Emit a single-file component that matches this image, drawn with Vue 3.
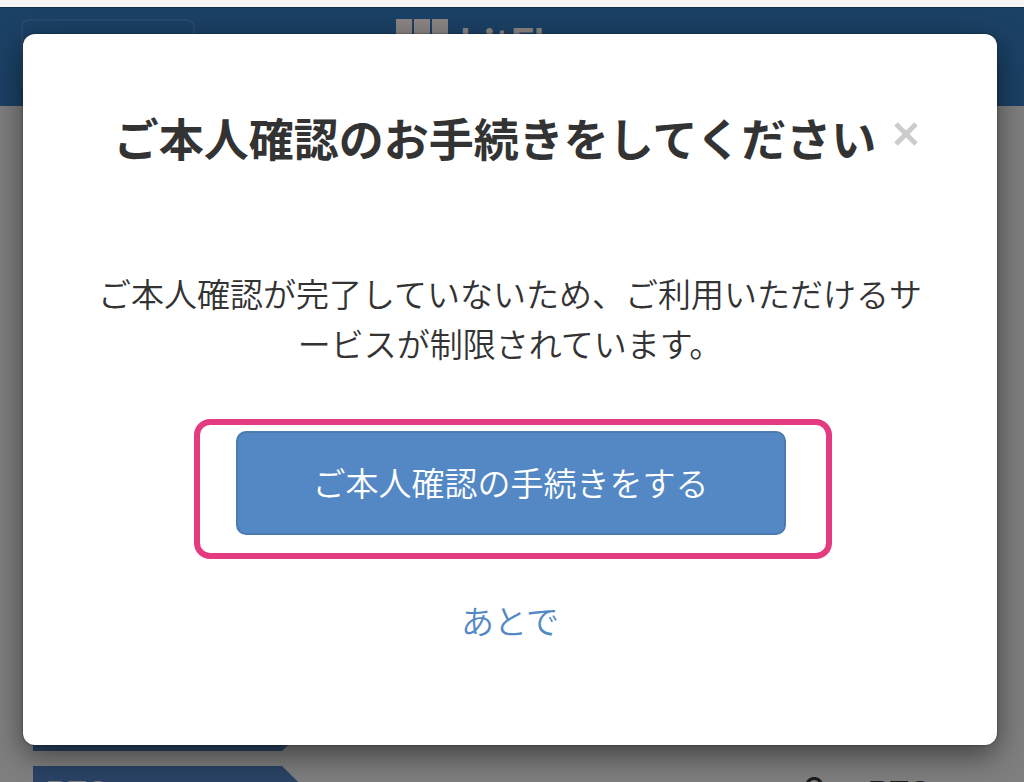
<script setup>
import { ref } from 'vue'

const open = ref(true)
const rows = [
  { unit: 'JPY', amount: '0' },
  { unit: 'BTC', amount: '0' },
]
</script>

<template>
  <div class="screen">
    <div class="page" aria-hidden="true">
      <header class="header">
        <span class="menu"></span>
        <span class="brand">
          <svg class="mark" viewBox="0 0 52 52" width="52" height="52">
            <rect x="0" y="0" width="16" height="16" />
            <rect x="18" y="0" width="16" height="16" />
            <rect x="36" y="0" width="16" height="16" />
            <rect x="0" y="18" width="16" height="16" />
            <rect x="18" y="18" width="16" height="16" />
            <rect x="0" y="36" width="16" height="16" />
          </svg>
          <span class="name">bitFlyer</span>
        </span>
      </header>
      <ul class="rows">
        <li v-for="row in rows" :key="row.unit" class="row">
          <span class="tag">{{ row.unit }}</span>
          <span class="amount">{{ row.amount }}</span>
          <span class="unit">{{ row.unit }}</span>
        </li>
      </ul>
    </div>

    <div v-if="open" class="backdrop">
      <section class="modal" role="dialog" aria-modal="true" aria-labelledby="modal-title">
        <div class="head">
          <h1 id="modal-title" class="title">ご本人確認のお手続きをしてください</h1>
          <button class="close" type="button" aria-label="閉じる" @click="open = false">
            <svg viewBox="0 0 24 24" width="24" height="24">
              <path d="M2 2L22 22M22 2L2 22" />
            </svg>
          </button>
        </div>
        <p class="message">ご本人確認が完了していないため、ご利用いただけるサービスが制限されています。</p>
        <div class="highlight">
          <button class="primary" type="button">ご本人確認の手続きをする</button>
        </div>
        <a class="later" href="#" @click.prevent="open = false">あとで</a>
      </section>
    </div>
  </div>
</template>

<style>
body {
  background: #7f7f7f;
}
</style>

<style scoped>
.screen {
  position: relative;
  min-height: 100vh;
  overflow: hidden;
  font-family: "Noto Sans CJK JP", sans-serif;
  color: #333;
}

.page {
  position: absolute;
  inset: 0;
  overflow: hidden;
  background: #7f7f7f;
  font-family: "Liberation Sans", sans-serif;
}

.header {
  display: grid;
  grid-template-columns: 1fr auto 1fr;
  align-items: start;
  box-sizing: border-box;
  height: 106px;
  padding: 12px 21px;
  border-top: 7px solid #f6f6f6;
  background: #1b4165;
  box-shadow: inset 0 1px 0 #173149;
}

.menu {
  box-sizing: border-box;
  width: 174px;
  height: 74px;
  border: 2px solid #28496a;
  border-radius: 8px;
}

.brand {
  display: flex;
  gap: 12px;
  padding-right: 24px;
  color: #8a8583;
}

.mark {
  fill: currentColor;
}

.name {
  font-family: Lato, sans-serif;
  font-size: 42px;
  font-weight: 700;
  line-height: 48px;
}

.rows {
  display: grid;
  gap: 15px;
  margin: 540px 33px 0;
  padding: 0;
  list-style: none;
}

.row {
  display: flex;
  align-items: flex-start;
  height: 105px;
  color: #1c1c1c;
  font-size: 30px;
  line-height: 40px;
}

.tag {
  box-sizing: border-box;
  width: 302px;
  height: 105px;
  padding: 5px 13px;
  background: #2a4365;
  clip-path: polygon(0 0, 249px 0, 100% 50%, 249px 100%, 0 100%);
  color: #807f7f;
  font-weight: 700;
}

.amount {
  margin-left: auto;
  padding: 5px 0;
  font-size: 40px;
}

.unit {
  padding: 5px 61px 5px 43px;
  font-weight: 700;
}

.backdrop {
  position: relative;
  padding: 34px 27px 36px 23px;
}

.modal {
  display: flex;
  flex-direction: column;
  align-items: center;
  padding: 70px 72px 100px;
  border-radius: 12px;
  background: #fff;
  box-shadow: 0 0 2px rgba(0, 0, 0, 0.5), 0 10px 30px rgba(0, 0, 0, 0.5);
}

.head {
  display: flex;
  align-items: flex-start;
  gap: 18px;
  margin-left: 12px;
}

.title {
  margin: 0;
  font-size: 45px;
  font-weight: 700;
  line-height: 68px;
  white-space: nowrap;
}

.close {
  display: flex;
  padding: 18px 0;
  border: 0;
  background: none;
  cursor: pointer;
}

.close svg {
  fill: none;
  stroke: #ccc;
  stroke-width: 5;
}

.message {
  margin: 96px 0 51px;
  font-size: 33px;
  font-weight: 350;
  line-height: 50px;
  text-align: center;
}

.highlight {
  box-sizing: border-box;
  width: 638px;
  max-width: 100%;
  margin-left: 5px;
  padding: 6px 40px 18px 36px;
  border: 6px solid #e43a80;
  border-radius: 16px;
}

.primary {
  width: 100%;
  padding: 24px 12px 26px;
  border: 2px solid #4c7bb1;
  border-radius: 10px;
  background: #5488c5;
  color: #fff;
  font: 350 33px/50px "Noto Sans CJK JP", sans-serif;
  cursor: pointer;
}

.later {
  margin-top: 36px;
  color: #5488c5;
  font-size: 33px;
  font-weight: 350;
  line-height: 50px;
  text-decoration: none;
}
</style>
